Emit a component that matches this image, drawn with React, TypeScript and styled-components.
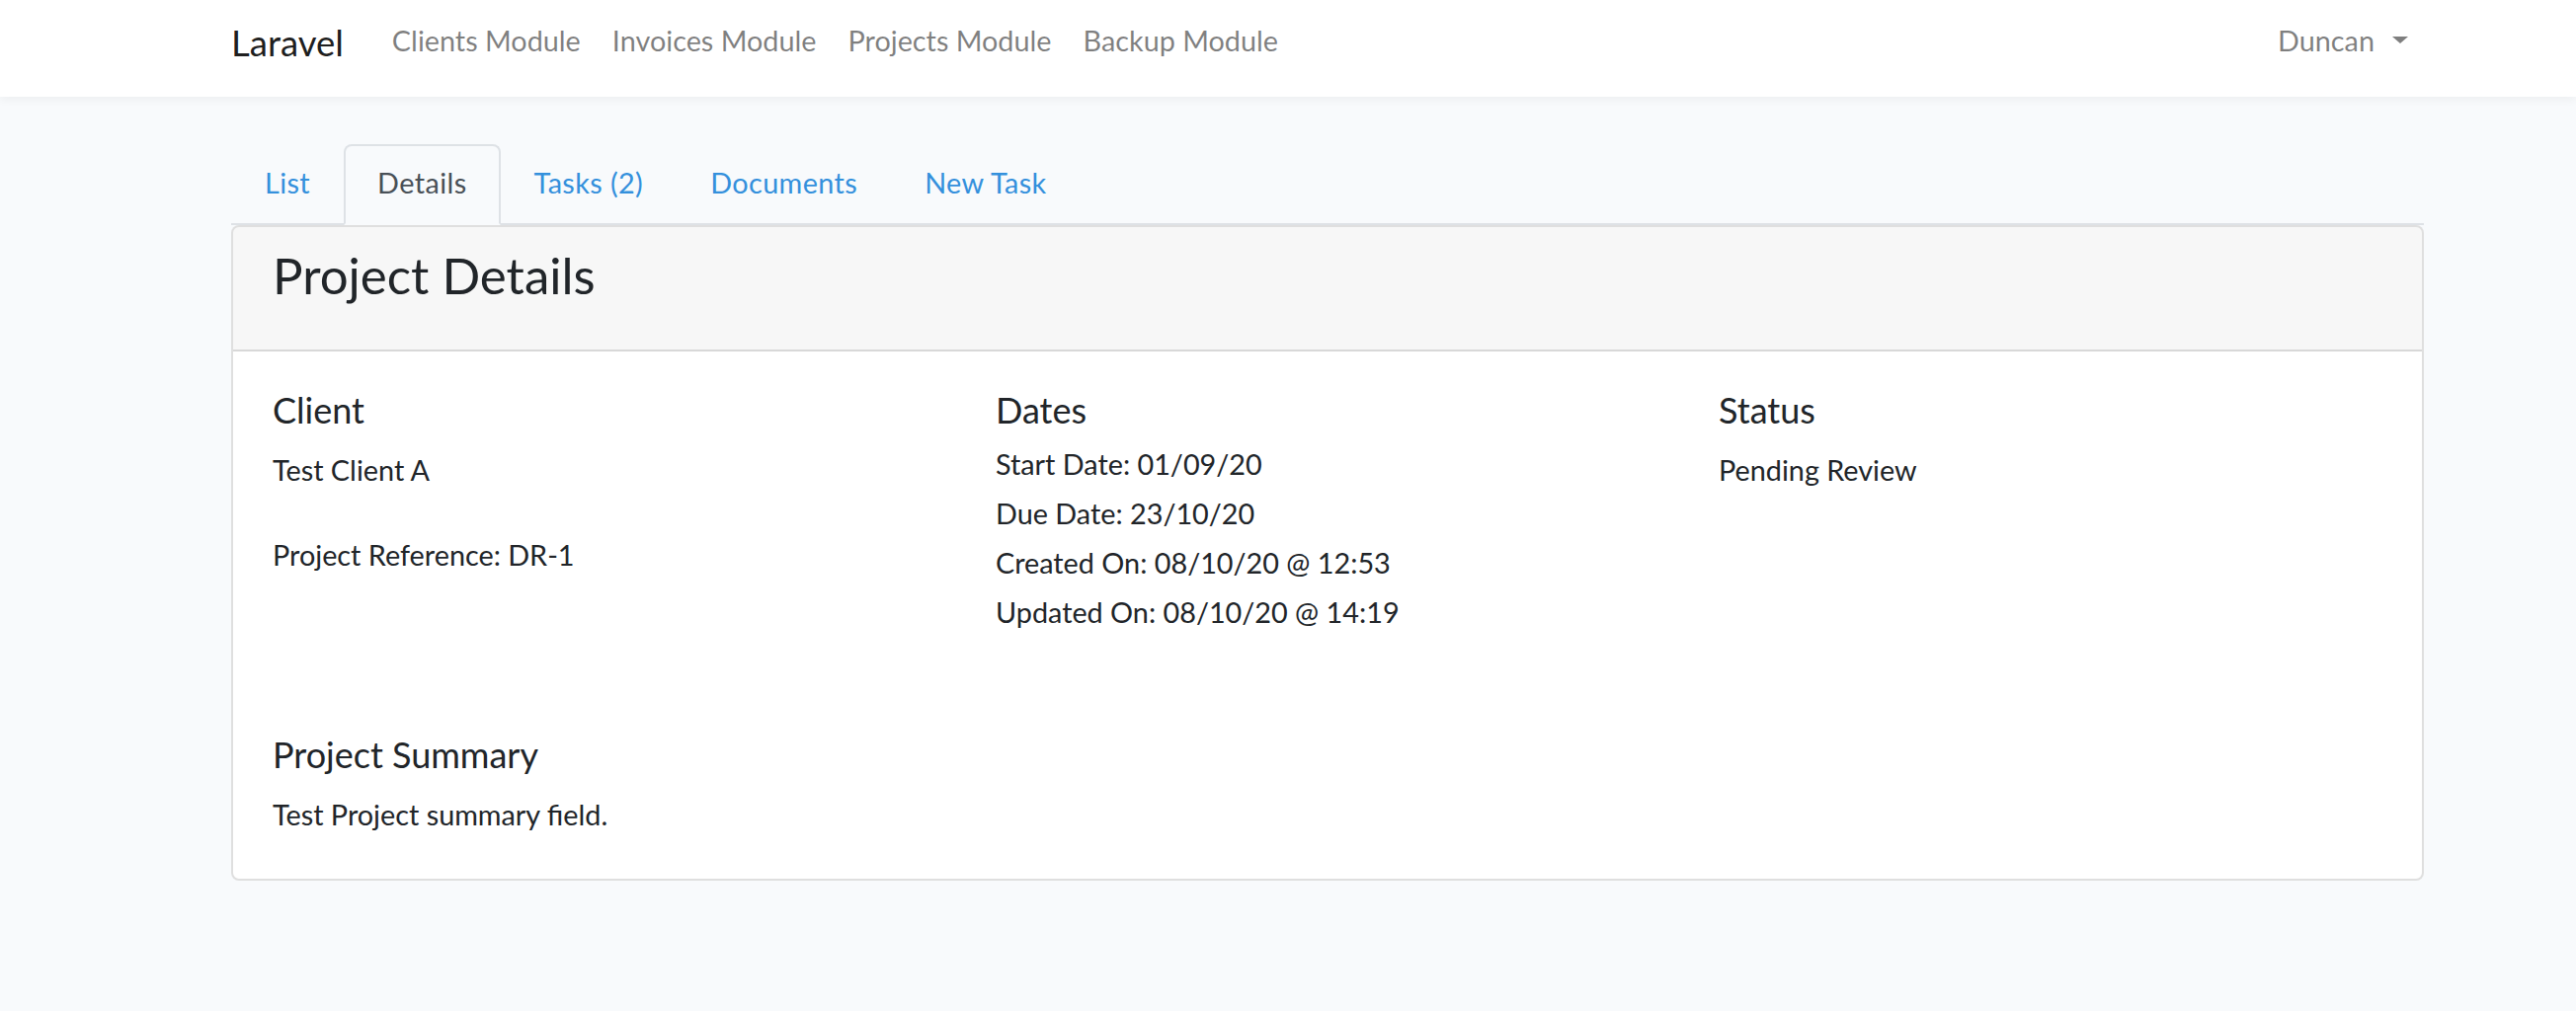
import React from "react";
import styled, { createGlobalStyle } from "styled-components";

const GlobalStyle = createGlobalStyle`
  html, body {
    margin: 0;
    padding: 0;
    background: #f8fafc;
    font-family: "Lato", "Noto Sans", sans-serif;
    color: #212529;
  }
  * { box-sizing: border-box; }
`;

const Navbar = styled.header`
  background: #ffffff;
  height: 98px;
  box-shadow: 0 4px 8px rgba(0, 0, 0, 0.04);
`;

const Container = styled.div`
  width: 2220px;
  margin-left: 234px;
`;

const NavInner = styled(Container)`
  height: 98px;
  padding-bottom: 12px;
  display: flex;
  align-items: center;
`;

const Brand = styled.a`
  font-size: 36.5px;
  line-height: 36px;
  color: rgba(0, 0, 0, 0.9);
  margin-right: 33px;
  text-decoration: none;
`;

const NavLinks = styled.nav`
  display: flex;
  align-items: center;
  flex: 1;
`;

const NavLink = styled.a`
  font-size: 28.8px;
  line-height: 28.8px;
  padding: 0 16px 3px;
  color: rgba(0, 0, 0, 0.5);
  text-decoration: none;
`;

const UserMenu = styled(NavLink)`
  display: flex;
  align-items: center;
  padding-right: 16px;
`;

const Caret = styled.span`
  display: inline-block;
  width: 0;
  height: 0;
  margin-left: 18px;
  margin-top: -2px;
  border-top: 7px solid rgba(0, 0, 0, 0.5);
  border-left: 8px solid transparent;
  border-right: 8px solid transparent;
`;

const Main = styled.main`
  padding-top: 48px;
`;

const Tabs = styled.ul`
  list-style: none;
  margin: 0;
  padding: 0;
  display: flex;
  border-bottom: 2px solid #dee2e6;
`;

const Tab = styled.li<{ $active?: boolean }>`
  margin-bottom: -2px;
  padding: 14px 32px 18px;
  font-size: 28.8px;
  line-height: 46px;
  letter-spacing: 0.4px;
  border: 2px solid ${(p) => (p.$active ? "#dee2e6" : "transparent")};
  border-bottom-color: ${(p) => (p.$active ? "#f8fafc" : "transparent")};
  border-radius: 8px 8px 0 0;
  background: ${(p) => (p.$active ? "#f8fafc" : "transparent")};
  color: ${(p) => (p.$active ? "#495057" : "#3490dc")};
  cursor: pointer;
`;

const Card = styled.section`
  background: #ffffff;
  border: 2px solid rgba(0, 0, 0, 0.125);
  border-radius: 8px;
  overflow: hidden;
`;

const CardHeader = styled.div`
  background: rgba(0, 0, 0, 0.03);
  border-bottom: 2px solid rgba(0, 0, 0, 0.125);
  padding: 23px 40px 49px;
`;

const Title = styled.h4`
  margin: 0;
  font-size: 51px;
  line-height: 52px;
  font-weight: 400;
`;

const CardBody = styled.div`
  padding: 38px 40px 42px;
`;

const Columns = styled.div`
  display: grid;
  grid-template-columns: repeat(3, 1fr);
  column-gap: 60px;
`;

const Heading = styled.h5<{ $tight?: boolean }>`
  margin: 0 0 ${(p) => (p.$tight ? "8px" : "16px")};
  font-size: 36px;
  line-height: 43.2px;
  font-weight: 400;
`;

const Text = styled.p<{ $gap?: number }>`
  margin: 0;
  margin-top: ${(p) => (p.$gap ? `${p.$gap}px` : "0")};
  font-size: 28.8px;
  line-height: 46px;
`;

const DateLine = styled.div`
  font-size: 28.8px;
  line-height: 50px;
`;

const Summary = styled.div`
  margin-top: 98px;
`;

const tabs = ["List", "Details", "Tasks (2)", "Documents", "New Task"];
const modules = ["Clients Module", "Invoices Module", "Projects Module", "Backup Module"];
const dates = [
  "Start Date: 01/09/20",
  "Due Date: 23/10/20",
  "Created On: 08/10/20 @ 12:53",
  "Updated On: 08/10/20 @ 14:19",
];

export default function App() {
  return (
    <>
      <GlobalStyle />
      <Navbar>
        <NavInner>
          <Brand href="#">Laravel</Brand>
          <NavLinks>
            {modules.map((m) => (
              <NavLink key={m} href="#">
                {m}
              </NavLink>
            ))}
          </NavLinks>
          <UserMenu href="#">
            Duncan
            <Caret />
          </UserMenu>
        </NavInner>
      </Navbar>
      <Main>
        <Container>
          <Tabs>
            {tabs.map((t) => (
              <Tab key={t} $active={t === "Details"}>
                {t}
              </Tab>
            ))}
          </Tabs>
          <Card>
            <CardHeader>
              <Title>Project Details</Title>
            </CardHeader>
            <CardBody>
              <Columns>
                <div>
                  <Heading>Client</Heading>
                  <Text>Test Client A</Text>
                  <Text $gap={40}>Project Reference: DR-1</Text>
                </div>
                <div>
                  <Heading $tight>Dates</Heading>
                  {dates.map((d) => (
                    <DateLine key={d}>{d}</DateLine>
                  ))}
                </div>
                <div>
                  <Heading>Status</Heading>
                  <Text>Pending Review</Text>
                </div>
              </Columns>
              <Summary>
                <Heading>Project Summary</Heading>
                <Text>Test Project summary field.</Text>
              </Summary>
            </CardBody>
          </Card>
        </Container>
      </Main>
    </>
  );
}
